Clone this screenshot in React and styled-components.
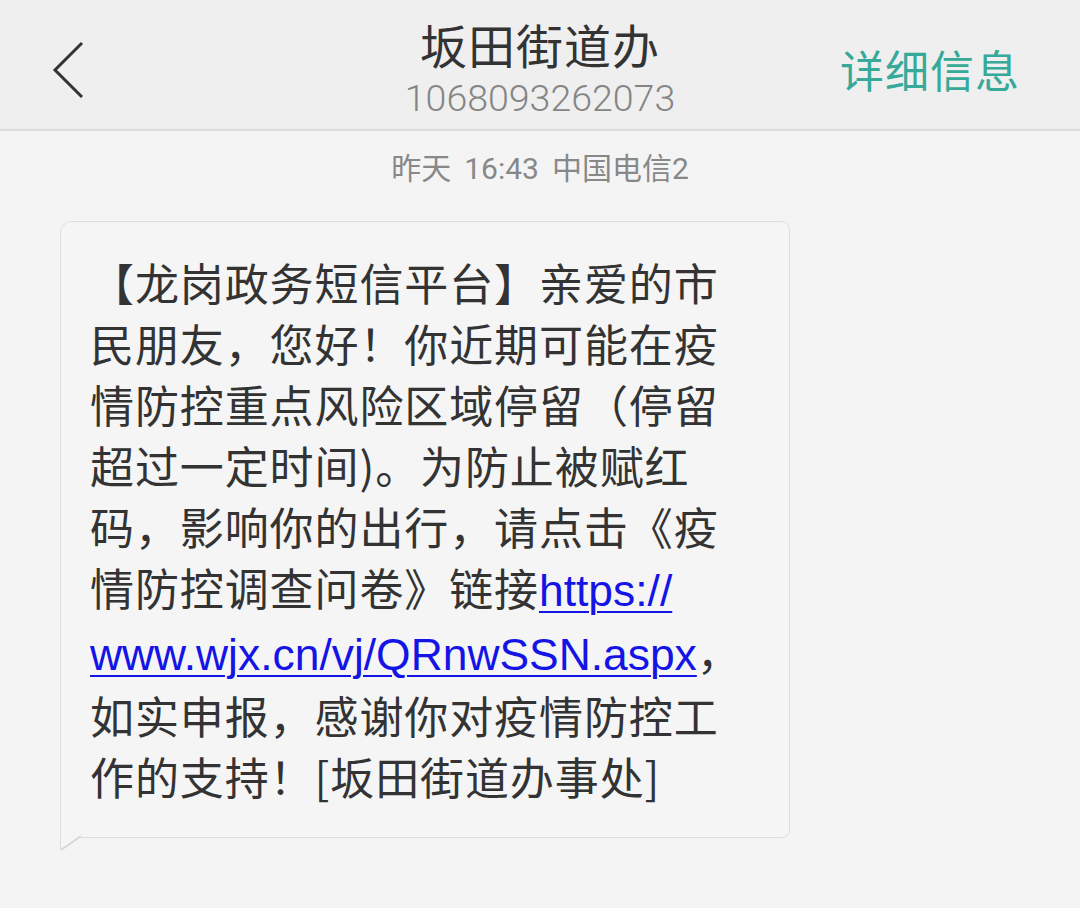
import React from 'react';
import styled, { createGlobalStyle } from 'styled-components';

const GlobalStyle = createGlobalStyle`
  html, body {
    margin: 0;
    padding: 0;
    background: #f4f4f4;
  }
  body {
    font-family: "Liberation Sans", "Noto Sans CJK SC", sans-serif;
    color: #333;
  }
`;

const Page = styled.div`
  width: 1080px;
  height: 908px;
  background: #f4f4f4;
  overflow: hidden;
`;

const NavBar = styled.header`
  height: 129px;
  display: grid;
  grid-template-columns: 1fr auto 1fr;
  align-items: center;
  background: #efefef;
  border-bottom: 2px solid #dcdcdc;
`;

const BackButton = styled.button`
  justify-self: start;
  margin-left: 50px;
  padding: 0;
  border: none;
  background: none;
  display: flex;
  margin-top: 10px;
`;

const TitleBlock = styled.div`
  display: flex;
  flex-direction: column;
  align-items: center;
  padding-top: 6px;
`;

const Title = styled.div`
  font-family: "Noto Sans CJK SC", sans-serif;
  font-size: 47px;
  line-height: 54px;
  color: #333;
  letter-spacing: 1px;
`;

const Number = styled.div`
  margin-top: 7px;
  font-family: Roboto, "Liberation Sans", sans-serif;
  font-weight: 300;
  font-size: 37.5px;
  line-height: 40px;
  color: #858585;
`;

const DetailLink = styled.a`
  justify-self: end;
  margin-right: 60px;
  margin-top: 8px;
  font-family: "Noto Sans CJK SC", sans-serif;
  font-size: 44px;
  color: #36a998;
  letter-spacing: 1px;
  text-decoration: none;
`;

const Stamp = styled.div`
  display: flex;
  justify-content: center;
  gap: 13px;
  padding-top: 19px;
  font-family: Roboto, "Noto Sans CJK SC", sans-serif;
  font-size: 30px;
  line-height: 38px;
  color: #888;
`;

const Thread = styled.div`
  padding: 33px 0 0 60px;
`;

const Bubble = styled.div`
  position: relative;
  width: 730px;
  box-sizing: border-box;
  padding: 30px 20px 30px 29px;
  background: #f5f5f5;
  border: 1.5px solid #dedede;
  border-radius: 12px 8px 8px 0;
  font-family: "Noto Sans CJK SC", sans-serif;
  font-size: 44px;
  line-height: 61px;
  letter-spacing: 0.9px;
  color: #333;

  /* tail at the lower left */
  &::after {
    content: "";
    position: absolute;
    left: -1.5px;
    bottom: -13px;
    width: 20px;
    height: 14.5px;
    background: linear-gradient(to bottom right, #f5f5f5 44%, #d8d8d8 47%, #d8d8d8 52%, transparent 56%);
    border-left: 1.5px solid #dedede;
  }
`;

const Link = styled.a`
  font-family: "Liberation Sans", sans-serif;
  font-size: 44.4px;
  color: #1414e6;
  letter-spacing: 0;
  text-decoration: underline;
  text-decoration-thickness: 2px;
  text-underline-offset: 5px;
`;

export default function App() {
  return (
    <Page>
      <GlobalStyle />
      <NavBar>
        <BackButton aria-label="返回">
          <svg width="36" height="60" viewBox="0 0 36 60">
            <path d="M32 3 L5 30 L32 57" fill="none" stroke="#333" strokeWidth="3" />
          </svg>
        </BackButton>
        <TitleBlock>
          <Title>坂田街道办</Title>
          <Number>1068093262073</Number>
        </TitleBlock>
        <DetailLink>详细信息</DetailLink>
      </NavBar>
      <Stamp>
        <span>昨天</span>
        <span>16:43</span>
        <span>中国电信2</span>
      </Stamp>
      <Thread>
        <Bubble>
          【龙岗政务短信平台】亲爱的市<br />
          民朋友，您好！你近期可能在疫<br />
          情防控重点风险区域停留（停留<br />
          超过一定时间)。为防止被赋红<br />
          码，影响你的出行，请点击《疫<br />
          情防控调查问卷》链接<Link>https://</Link><br />
          <Link>www.wjx.cn/vj/QRnwSSN.aspx</Link>，<br />
          如实申报，感谢你对疫情防控工<br />
          作的支持！[坂田街道办事处]
        </Bubble>
      </Thread>
    </Page>
  );
}
